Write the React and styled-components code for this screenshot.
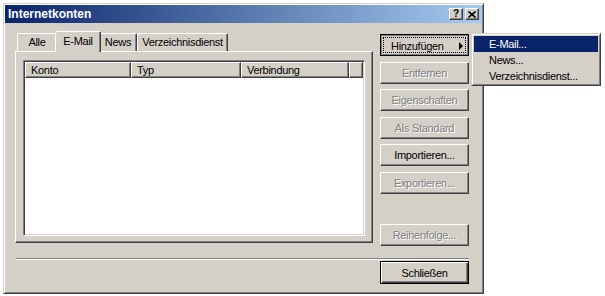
import React from "react";
import styled, { createGlobalStyle } from "styled-components";

const GlobalStyle = createGlobalStyle`
  body {
    margin: 0;
    background: #fff;
    font-family: "Liberation Sans", Arial, sans-serif;
    font-size: 11px;
    letter-spacing: -0.3px;
    color: #000;
  }
`;

const Page = styled.div`
  position: relative;
  width: 605px;
  height: 296px;
  padding: 3px 0 0 3px;
  box-sizing: border-box;
  overflow: hidden;
`;

const Window = styled.div`
  width: 481px;
  height: 291px;
  box-sizing: border-box;
  background: #d4d0c8;
  border: 1px solid;
  border-color: #d4d0c8 #404040 #404040 #d4d0c8;
  box-shadow: inset 1px 1px #fff, inset -1px -1px #808080;
  padding: 1px;
  display: flex;
  flex-direction: column;
`;

const TitleBar = styled.div`
  height: 18px;
  flex-shrink: 0;
  display: flex;
  align-items: center;
  padding: 0 3px 0 3px;
  background: linear-gradient(to right, #0a246a, #a6caf0);
`;

const Title = styled.div`
  flex: 1;
  color: #fff;
  font-weight: bold;
  font-size: 12px;
  letter-spacing: 0;
`;

const CaptionButton = styled.div`
  width: 14px;
  height: 12px;
  box-sizing: border-box;
  margin-left: ${({ $gap }) => $gap || 0}px;
  background: #d4d0c8;
  border: 1px solid;
  border-color: #fff #404040 #404040 #fff;
  box-shadow: inset -1px -1px #808080;
  display: flex;
  align-items: center;
  justify-content: center;
  font-weight: bold;
  font-size: 10px;
  line-height: 10px;
  letter-spacing: 0;
`;

const Body = styled.div`
  flex: 1;
  display: flex;
  flex-direction: column;
  padding: 8px 13px 11px 10px;
`;

const Main = styled.div`
  display: flex;
  gap: 7px;
`;

const TabArea = styled.div`
  width: 358px;
  display: flex;
  flex-direction: column;
`;

const TabRow = styled.div`
  height: 20px;
  display: flex;
  align-items: flex-end;
  padding-left: 2px;
  position: relative;
  z-index: 1;
`;

const Tab = styled.div`
  box-sizing: border-box;
  width: ${({ $w, $active }) => $w + ($active ? 4 : 0)}px;
  height: ${({ $active }) => ($active ? 21 : 18)}px;
  margin: ${({ $active }) => ($active ? "0 -2px -1px -2px" : "0")};
  padding-top: ${({ $active }) => ($active ? 2 : 1)}px;
  text-align: center;
  background: #d4d0c8;
  border: 1px solid;
  border-bottom: none;
  border-color: #fff #404040 transparent #fff;
  border-radius: 2px 2px 0 0;
  box-shadow: inset -1px 0 #808080;
  line-height: 14px;
  white-space: nowrap;
  position: relative;
  z-index: ${({ $active }) => ($active ? 2 : 0)};
`;

const Panel = styled.div`
  height: 192px;
  box-sizing: border-box;
  border: 1px solid;
  border-color: #fff #404040 #404040 #fff;
  box-shadow: inset -1px -1px #808080;
  padding: 8px 7px 6px 7px;
  display: flex;
`;

const ListView = styled.div`
  flex: 1;
  background: #fff;
  border: 1px solid;
  border-color: #808080 #fff #fff #808080;
  box-shadow: inset 1px 1px #404040, inset -1px -1px #d4d0c8;
  padding: 1px;
`;

const Header = styled.div`
  display: flex;
  height: 16px;
`;

const HeaderCell = styled.div`
  box-sizing: border-box;
  width: ${({ $w }) => ($w ? `${$w}px` : "auto")};
  flex: ${({ $w }) => ($w ? "none" : 1)};
  height: 16px;
  background: #d4d0c8;
  border: 1px solid;
  border-color: #fff #404040 #404040 #fff;
  box-shadow: inset -1px -1px #808080;
  padding-left: 5px;
  line-height: 14px;
`;

const ButtonColumn = styled.div`
  width: 89px;
  display: flex;
  flex-direction: column;
  gap: 5.6px;
  padding-top: 3px;
`;

const Spacer = styled.div`
  height: ${({ $h }) => $h}px;
`;

const Button = styled.div`
  box-sizing: border-box;
  width: 89px;
  height: ${({ $h }) => $h || 22}px;
  background: #d4d0c8;
  display: flex;
  align-items: center;
  justify-content: ${({ $menu }) => ($menu ? "space-between" : "center")};
  padding: ${({ $menu }) => ($menu ? "1px 5px 0 10px" : "0")};
  border: 1px solid;
  border-color: ${({ $framed }) =>
    $framed ? "#000" : "#fff #404040 #404040 #fff"};
  box-shadow: ${({ $framed, $pressed }) =>
    $pressed
      ? "inset 1px 1px #808080, inset -1px -1px #808080"
      : $framed
      ? "inset 1px 1px #fff, inset -1px -1px #404040, inset -2px -2px #808080"
      : "inset -1px -1px #808080"};
  outline: ${({ $pressed }) => ($pressed ? "1px dotted #000" : "none")};
  outline-offset: -4px;
  color: ${({ $disabled }) => ($disabled ? "#808080" : "#000")};
  text-shadow: ${({ $disabled }) => ($disabled ? "1px 1px 0 #fff" : "none")};
  white-space: nowrap;
`;

const Arrow = styled.span`
  width: 0;
  height: 0;
  border-top: 4px solid transparent;
  border-bottom: 4px solid transparent;
  border-left: 4px solid #000;
`;

const Separator = styled.div`
  margin: 12px 0 0 1px;
  border-top: 1px solid #808080;
  border-bottom: 1px solid #fff;
`;

const Footer = styled.div`
  display: flex;
  justify-content: flex-end;
  margin-top: 1px;
`;

const Menu = styled.div`
  position: absolute;
  left: 471px;
  top: 33px;
  width: 130px;
  box-sizing: border-box;
  background: #d4d0c8;
  border: 1px solid;
  border-color: #d4d0c8 #404040 #404040 #d4d0c8;
  box-shadow: inset 1px 1px #fff, inset -1px -1px #808080;
  padding: 2px 2px 1px 2px;
  z-index: 10;
`;

const MenuItem = styled.div`
  height: 16px;
  line-height: 16px;
  padding-left: 15px;
  background: ${({ $active }) => ($active ? "#0a246a" : "transparent")};
  color: ${({ $active }) => ($active ? "#fff" : "#000")};
  white-space: nowrap;
`;

const tabs = [
  { label: "Alle", w: 40 },
  { label: "E-Mail", w: 42, active: true },
  { label: "News", w: 38 },
  { label: "Verzeichnisdienst", w: 91 },
];

const columns = [
  { label: "Konto", w: 106 },
  { label: "Typ", w: 110 },
  { label: "Verbindung", w: 108 },
  { label: "" },
];

const App = () => (
  <>
    <GlobalStyle />
    <Page>
      <Window>
        <TitleBar>
          <Title>Internetkonten</Title>
          <CaptionButton>?</CaptionButton>
          <CaptionButton $gap={2}>
            <svg width="8" height="7" viewBox="0 0 8 7">
              <path
                d="M0.5 0.5 L7.5 6.5 M7.5 0.5 L0.5 6.5"
                stroke="#000"
                strokeWidth="1.6"
              />
            </svg>
          </CaptionButton>
        </TitleBar>
        <Body>
          <Main>
            <TabArea>
              <TabRow>
                {tabs.map((t) => (
                  <Tab key={t.label} $active={t.active} $w={t.w}>
                    {t.label}
                  </Tab>
                ))}
              </TabRow>
              <Panel>
                <ListView>
                  <Header>
                    {columns.map((c, i) => (
                      <HeaderCell key={i} $w={c.w}>
                        {c.label}
                      </HeaderCell>
                    ))}
                  </Header>
                </ListView>
              </Panel>
            </TabArea>
            <ButtonColumn>
              <Button $menu $framed $pressed>
                <span>Hinzufügen</span>
                <Arrow />
              </Button>
              <Button $disabled>Entfernen</Button>
              <Button $disabled>Eigenschaften</Button>
              <Button $disabled>Als Standard</Button>
              <Button>Importieren...</Button>
              <Button $disabled>Exportieren...</Button>
              <Spacer $h={19} />
              <Button $disabled>Reihenfolge...</Button>
            </ButtonColumn>
          </Main>
          <Separator />
          <Footer>
            <Button $framed $h={23}>
              Schließen
            </Button>
          </Footer>
        </Body>
      </Window>
      <Menu>
        <MenuItem $active>E-Mail...</MenuItem>
        <MenuItem>News...</MenuItem>
        <MenuItem>Verzeichnisdienst...</MenuItem>
      </Menu>
    </Page>
  </>
);

export default App;
